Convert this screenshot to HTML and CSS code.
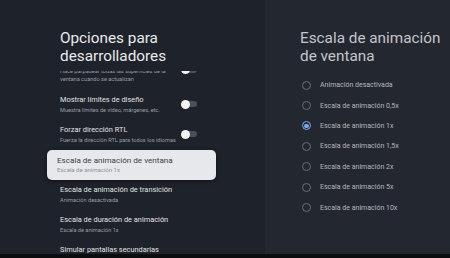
FILE: index.html
```html
<!DOCTYPE html>
<html lang="es">
<head>
<meta charset="utf-8">
<link rel="stylesheet" href="styles.css">
</head>
<body>
<div class="screen">
  <section class="left">
    <h1 class="title">Opciones para<br>desarrolladores</h1>
    <div class="list">
      <div class="row first">
        <div class="text">
          <div class="s">Hace parpadear todas las superficies de la<br>ventana cuando se actualizan</div>
        </div>
        <span class="toggle"></span>
      </div>
      <div class="row">
        <div class="text">
          <div class="t">Mostrar límites de diseño</div>
          <div class="s">Muestra límites de vídeo, márgenes, etc.</div>
        </div>
        <span class="toggle"></span>
      </div>
      <div class="row">
        <div class="text">
          <div class="t">Forzar dirección RTL</div>
          <div class="s">Fuerza la dirección RTL para todos los idiomas</div>
        </div>
        <span class="toggle"></span>
      </div>
      <div class="row focused">
        <div class="text">
          <div class="t">Escala de animación de ventana</div>
          <div class="s">Escala de animación 1x</div>
        </div>
      </div>
      <div class="row">
        <div class="text">
          <div class="t">Escala de animación de transición</div>
          <div class="s">Animación desactivada</div>
        </div>
      </div>
      <div class="row">
        <div class="text">
          <div class="t">Escala de duración de animación</div>
          <div class="s">Escala de animación 1x</div>
        </div>
      </div>
      <div class="row">
        <div class="text">
          <div class="t">Simular pantallas secundarias</div>
        </div>
      </div>
    </div>
  </section>
  <section class="right">
    <h2 class="title dim">Escala de animación<br>de ventana</h2>
    <ul class="radios">
      <li class="opt"><span class="radio"></span>Animación desactivada</li>
      <li class="opt"><span class="radio"></span>Escala de animación 0,5x</li>
      <li class="opt"><span class="radio on"></span>Escala de animación 1x</li>
      <li class="opt"><span class="radio"></span>Escala de animación 1,5x</li>
      <li class="opt"><span class="radio"></span>Escala de animación 2x</li>
      <li class="opt"><span class="radio"></span>Escala de animación 5x</li>
      <li class="opt"><span class="radio"></span>Escala de animación 10x</li>
    </ul>
  </section>
</div>
<div class="bottom"></div>
</body>
</html>
```
FILE: styles.css
```css
html, body {
  margin: 0;
  padding: 0;
  background: #0b0c0e;
}
body {
  width: 450px;
  height: 258px;
  overflow: hidden;
  font-family: Roboto, "Noto Sans", sans-serif;
  display: flex;
  flex-direction: column;
}
.screen {
  height: 254px;
  display: flex;
}
.bottom {
  height: 4px;
  background: #0b0c0e;
}
.left {
  width: 265px;
  background: #1e222a;
  display: flex;
  flex-direction: column;
}
.right {
  flex: 1;
  background: #232830;
  display: flex;
  flex-direction: column;
}
.title {
  margin: 0;
  padding: 29px 0 0 60px;
  font-size: 15.3px;
  line-height: 18px;
  font-weight: 400;
  color: #e9eaec;
}
.title.dim {
  padding-left: 35px;
  color: #c3c5ca;
}
.list {
  margin-top: 6px;
  flex: 1;
  overflow: hidden;
  padding-left: 47px;
}
.row {
  width: 169px;
  box-sizing: border-box;
  padding: 4px 19px 6px 13px;
  display: flex;
  align-items: center;
  justify-content: space-between;
}
.row.first {
  margin-top: -3px;
  padding-top: 0;
  padding-bottom: 7px;
}
.row.first .s {
  line-height: 7.5px;
}
.row.first .toggle {
  align-self: flex-start;
  margin-top: -1.5px;
}
.t {
  font-size: 7.4px;
  line-height: 12px;
  color: #e2e3e6;
  white-space: nowrap;
}
.s {
  font-size: 5.6px;
  line-height: 8px;
  color: #9a9ea5;
  white-space: nowrap;
}
.row.focused {
  background: #e7e8ec;
  border-radius: 5px;
  padding-left: 10px;
  box-shadow: 0 1px 4px rgba(0, 0, 0, 0.5);
}
.row.focused .t {
  font-size: 8.1px;
  color: #3b3d42;
}
.row.focused .s {
  font-size: 6px;
  color: #8e9197;
}
.toggle {
  position: relative;
  width: 15px;
  height: 6px;
  border-radius: 3px;
  background: #4a4f58;
  flex: none;
}
.toggle::before {
  content: "";
  position: absolute;
  left: -1px;
  top: -1.5px;
  width: 9px;
  height: 9px;
  border-radius: 50%;
  background: #f4f4f5;
}
.radios {
  list-style: none;
  margin: 10px 0 0;
  padding: 0 0 0 37px;
}
.opt {
  height: 20.4px;
  display: flex;
  align-items: center;
  gap: 9px;
  font-size: 7px;
  color: #b4b7bc;
}
.radio {
  width: 9px;
  height: 9px;
  box-sizing: border-box;
  border: 1px solid #6a6e76;
  border-radius: 50%;
  flex: none;
  display: flex;
  align-items: center;
  justify-content: center;
}
.radio.on {
  border: 1.3px solid #7ea8ee;
}
.radio.on::after {
  content: "";
  width: 4.5px;
  height: 4.5px;
  border-radius: 50%;
  background: #7ea8ee;
}
```
